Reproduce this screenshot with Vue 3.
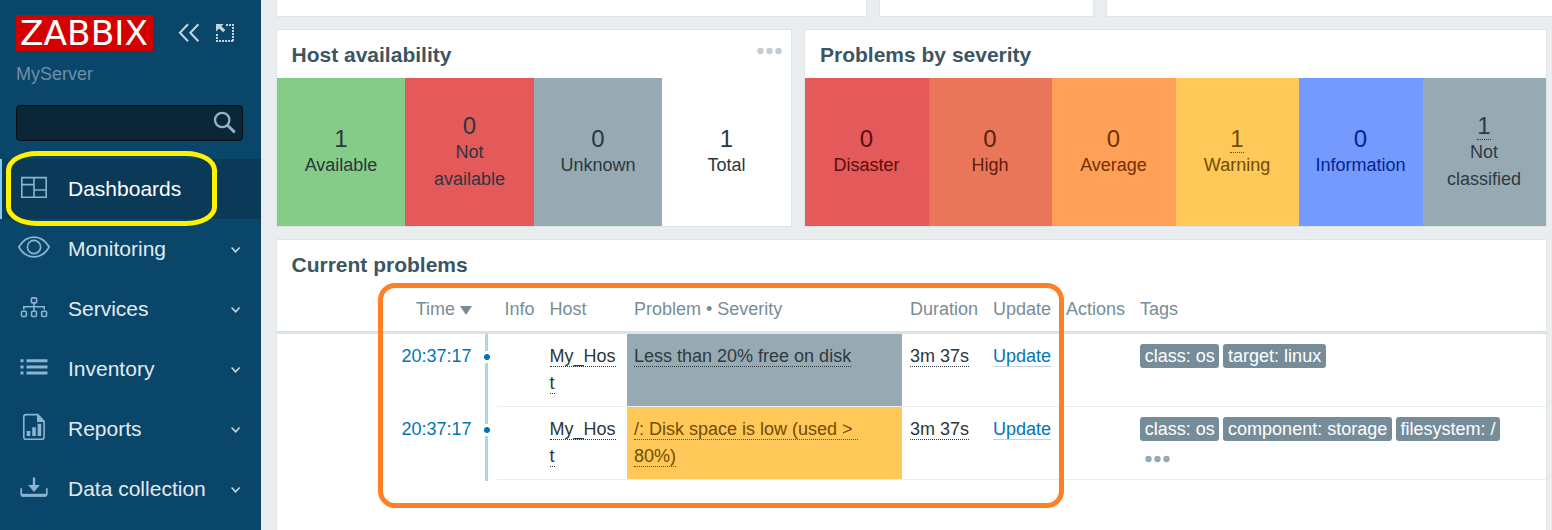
<script setup>
const menu = [
  { label: 'Dashboards', icon: 'dash', active: true },
  { label: 'Monitoring', icon: 'eye' },
  { label: 'Services', icon: 'tree' },
  { label: 'Inventory', icon: 'list' },
  { label: 'Reports', icon: 'report' },
  { label: 'Data collection', icon: 'download' },
]
const hosts = [
  { n: 1, label: 'Available', cls: 'ok' },
  { n: 0, label: 'Not available', cls: 'bad' },
  { n: 0, label: 'Unknown', cls: 'unknown' },
  { n: 1, label: 'Total', cls: 'total' },
]
const severities = [
  { n: 0, label: 'Disaster', cls: 'disaster' },
  { n: 0, label: 'High', cls: 'high' },
  { n: 0, label: 'Average', cls: 'average' },
  { n: 1, label: 'Warning', cls: 'warning', link: true },
  { n: 0, label: 'Information', cls: 'info' },
  { n: 1, label: 'Not classified', cls: 'na', link: true },
]
const problems = [
  { time: '20:37:17', name: 'Less than 20% free on disk', cls: 'na', tags: ['class: os', 'target: linux'] },
  { time: '20:37:17', name: '/: Disk space is low (used >\u00a0 80%)', cls: 'warning', tags: ['class: os', 'component: storage', 'filesystem: /'], more: true },
]
</script>

<template>
  <div class="page">
    <aside class="sidebar">
      <div class="brand">
        <div class="logo">
          <svg width="137" height="36" viewBox="0 0 137 36">
            <text x="4" y="30.3" font-size="34" textLength="128" lengthAdjust="spacingAndGlyphs" fill="#fff">ZABBIX</text>
          </svg>
        </div>
        <svg class="collapse" width="22" height="20" viewBox="0 0 22 20" fill="none" stroke="#c3d5e0" stroke-width="2">
          <path d="M10 1.3 1.9 9.8 10 18.3M20.4 1.3 12.3 9.8l8.1 8.5" />
        </svg>
        <svg class="kiosk" width="20" height="20" viewBox="0 0 20 20">
          <path d="M11 2H19" stroke="#c3d5e0" stroke-width="2" stroke-dasharray="2 1" />
          <path d="M18 4V18M2 11V18M1 18H19" fill="none" stroke="#c3d5e0" stroke-width="2" stroke-dasharray="2 1" />
          <path d="M1 1h7.600L6.400 3.200l3.900 3.900-2.200 2.200-3.900-3.900L1 8.600z" fill="#c3d5e0" />
        </svg>
      </div>
      <div class="server">MyServer</div>
      <div class="search">
        <svg width="24" height="24" viewBox="0 0 24 24" fill="none" stroke="#8fb3cb">
          <circle cx="9.200" cy="9" r="7.200" stroke-width="2.300" />
          <path d="M14.400 14.200 21.800 21.400" stroke-width="2.900" />
        </svg>
      </div>
      <nav>
        <div v-for="m in menu" :key="m.label" class="item" :class="{ active: m.active }">
          <svg class="icon" width="36" height="36" viewBox="0 0 36 36" fill="none" stroke="#8ab4d0" stroke-width="1.600">
            <path v-if="m.icon === 'dash'" d="M5.800 7.600h24.400v19.600H5.800zM18 7.600v19.600M5.800 14.600H18M18 20h12.200" />
            <g v-else-if="m.icon === 'eye'">
              <path d="M2.800 17C10.500 3.800 25.500 3.800 33.200 17 25.500 30.200 10.500 30.200 2.800 17z" />
              <circle cx="18" cy="17" r="6.600" />
            </g>
            <g v-else-if="m.icon === 'tree'">
              <rect x="15.400" y="7.900" width="5.200" height="5" rx="1" />
              <path d="M18 12.900v7.800M7.800 19.600v-2.900h20.400v2.900" />
              <rect x="5.500" y="21.300" width="4.800" height="5.200" rx="1" />
              <rect x="15.600" y="21.300" width="4.800" height="5.200" rx="1" />
              <rect x="25.700" y="21.300" width="4.800" height="5.200" rx="1" />
            </g>
            <g v-else-if="m.icon === 'list'" stroke-width="3">
              <path d="M4.500 10.800h3M10.500 10.800h21M4.500 17h3M10.500 17h21M4.500 23h3M10.500 23h21" />
            </g>
            <g v-else-if="m.icon === 'report'">
              <path d="M10.300 4.600h11.500l6.300 6.600v15.700q0 2.300-2.300 2.300H10.100q-2.300 0-2.300-2.300V6.900q0-2.300 2.500-2.300z" />
              <path d="M21 4.200v7.800h7.600z" fill="#8ab4d0" stroke="none" />
              <path d="M12.500 26v-5M18 26v-8.800M23.400 26V13.800" stroke-width="3.600" />
            </g>
            <g v-else>
              <path d="M18 7.500v8" stroke-width="2.400" />
              <path d="M12.200 15h11.600L18 22z" fill="#8ab4d0" stroke="none" />
              <path d="M5.200 18.300v5.400q0 2 2 2h21.600q2 0 2-2v-5.400" stroke-width="1.700" />
              <path d="M6 25.300h24" stroke-width="3" />
            </g>
          </svg>
          <span class="label">{{ m.label }}</span>
          <svg v-if="!m.active" class="chev" width="10" height="8" viewBox="0 0 10 8" fill="none" stroke="#c3d5e0" stroke-width="1.700">
            <path d="M.6 1.500 4.600 5.800 8.600 1.500" />
          </svg>
        </div>
      </nav>
      <div class="mark yellow"></div>
    </aside>

    <main class="main">
      <div class="row top">
        <div class="widget w1"></div>
        <div class="widget w2"></div>
        <div class="widget w3"></div>
      </div>
      <div class="row mid">
        <section class="widget hostw">
          <header>
            <h4>Host availability</h4>
            <svg width="25" height="8" viewBox="0 0 25 8" fill="#c3ced4"><circle cx="3.500" cy="4" r="3.200" /><circle cx="12.500" cy="4" r="3.200" /><circle cx="21.500" cy="4" r="3.200" /></svg>
          </header>
          <div class="tiles">
            <div v-for="t in hosts" :key="t.label" class="tile" :class="t.cls">
              <span class="num">{{ t.n }}</span>
              <span class="name">{{ t.label }}</span>
            </div>
          </div>
        </section>
        <section class="widget sevw">
          <header><h4>Problems by severity</h4></header>
          <div class="tiles">
            <div v-for="t in severities" :key="t.label" class="tile" :class="t.cls">
              <span class="num" :class="{ dotted: t.link }">{{ t.n }}</span>
              <span class="name">{{ t.label }}</span>
            </div>
          </div>
        </section>
      </div>
      <section class="widget problems">
        <header><h4>Current problems</h4></header>
        <div class="grid thead">
          <div class="time">Time <i class="sort"></i></div>
          <div></div>
          <div class="c info-c">Info</div>
          <div class="c host">Host</div>
          <div class="c prob">Problem • Severity</div>
          <div class="c">Duration</div>
          <div class="c">Update</div>
          <div class="c">Actions</div>
          <div class="c">Tags</div>
        </div>
        <div v-for="p in problems" :key="p.name" class="grid trow">
          <div class="time"><a>{{ p.time }}</a></div>
          <div class="line"><i></i></div>
          <div class="c"></div>
          <div class="c host"><span class="dotted">My_Host</span></div>
          <div class="c prob" :class="p.cls"><span class="dotted">{{ p.name }}</span></div>
          <div class="c"><span class="dotted">3m 37s</span></div>
          <div class="c"><a class="upd">Update</a></div>
          <div class="c"></div>
          <div class="c tagcell">
            <div class="tags"><span v-for="t in p.tags" :key="t" class="tag">{{ t }}</span></div>
            <svg v-if="p.more" width="25" height="8" viewBox="0 0 25 8" fill="#97aab3"><circle cx="3.500" cy="4" r="3.200" /><circle cx="12.500" cy="4" r="3.200" /><circle cx="21.500" cy="4" r="3.200" /></svg>
          </div>
        </div>
      </section>
      <div class="mark orange"></div>
    </main>
  </div>
</template>

<style>
html, body { overflow: hidden; }
</style>

<style scoped>
* { box-sizing: border-box; }
.page { position: relative; display: flex; width: 1552px; height: 530px; overflow: hidden; font: 18px/27px "Liberation Sans", Arial, sans-serif; color: #2a373e; background: #e9edf0; }
.sidebar { width: 261px; flex: none; background: #0a466a; }
.brand { display: flex; padding: 15px 0 0 16px; height: 61px; }
.logo { width: 137px; height: 36px; background: #d40000; font-family: "DejaVu Sans", sans-serif; }
.logo svg { display: block; overflow: visible; }
.collapse { margin: 8px 0 0 25px; }
.kiosk { margin: 8px 0 0 15px; }
.server { padding-left: 16px; color: #6d90a7; }
.search { display: flex; justify-content: flex-end; margin: 17px 18px 0 16px; height: 36px; padding: 5px 5px 0 0; border: 1px solid #020d14; border-radius: 4px; background: #092738; }
nav { margin-top: 18px; }
.item { display: flex; align-items: center; height: 60px; padding: 0 20px 2px 16px; font-size: 21px; color: #e3eaef; }
.item.active { padding-left: 14px; border-left: 2px solid #80ccf7; background: #0b3a58; color: #fff; }
.label { flex: 1; padding-left: 16px; }
.chev { margin-top: 3px; }
.main { flex: 1; min-width: 0; padding-left: 15px; }
.row { display: flex; gap: 12px; }
.widget { flex: none; background: #fff; border: 1px solid #dfe4e7; }
.top { height: 17px; }
.top .widget { border-top: 0; }
.w1 { width: 591px; }
.w2 { width: 215px; }
.w3 { width: 460px; }
.mid { margin-top: 12px; height: 198px; }
.hostw { width: 516px; }
.sevw { width: 743px; }
header { display: flex; justify-content: space-between; height: 48px; padding: 0 9px 0 14.500px; }
.sevw header { padding-left: 15px; }
header svg { margin-top: 17px; }
h4 { margin: 0; font-size: 21px; line-height: 50px; color: #3c5563; }
.tiles { display: grid; height: 148px; grid-template-columns: 128px 129px 128px 129px; }
.sevw .tiles { grid-template-columns: 124px 123px 124px 123px 124px 123px; }
.tile { display: flex; flex-direction: column; align-items: center; justify-content: center; padding: 0 15px; text-align: center; }
.sevw .tile { padding: 0 16px 0 15px; }
.tile .num { height: 28px; padding-top: 1px; font-size: 24px; line-height: 25px; }
.tile .name { margin-top: -1px; }
.ok { background: #86cc89; }
.bad { background: #e45959; }
.unknown { background: #97aab3; }
.disaster { background: #e45959; color: #5a0e0e; }
.high { background: #e97659; color: #5f1d0a; }
.average { background: #ffa059; color: #733100; }
.warning { background: #ffc859; color: #734d00; }
.info { background: #7499ff; color: #00268e; }
.na { background: #97aab3; color: #2d3a40; }
.dotted { border-bottom: 1px dotted currentColor; }
.problems { width: 1271px; height: 300px; margin-top: 12px; }
.grid { display: grid; grid-template-columns: 201px 19px 45px 85px 275px 83px 73px 74px 414px; }
.thead { height: 46px; padding-top: 8px; border-bottom: 3px solid #dce2e5; color: #768d99; }
.time { padding-right: 6.500px; text-align: right; }
.thead .time { padding-right: 6px; }
.sort { display: inline-block; border: 6px solid transparent; border-top: 9px solid #768d99; border-bottom: 0; }
.c { padding-left: 8px; white-space: nowrap; }
.c.prob { padding-left: 7px; }
.c.host, .info-c { padding-left: 7.500px; }
.trow { height: 73px; }
.trow .time, .trow .c { padding-top: 9px; }
.trow .c { border-bottom: 1px solid #ebeef0; }
.trow .host { padding-right: 10px; white-space: normal; word-break: break-all; }
.trow .prob { padding-right: 30px; white-space: normal; }
a { color: #0275b8; }
.upd { border-bottom: 1px solid #c3d3dc; }
.line { display: flex; justify-content: center; padding-right: 1px; background: linear-gradient(#a8d6ee, #a8d6ee) 7px 0 / 3px 100% no-repeat; }
.line i { width: 6px; height: 12px; margin-top: 17px; background: radial-gradient(circle at 50% 50%, #0275b8 2.600px, #fff 3.300px); }
.trow:last-child .line { margin-bottom: -1px; }
.tags { display: flex; gap: 4px; padding-top: 1px; height: 27px; }
.tag { height: 24px; padding: 0 4.700px; border-radius: 3px; line-height: 24px; background: #768d99; color: #fff; }
.tagcell svg { display: block; margin: 12px 0 0 5px; }
.mark { position: absolute; pointer-events: none; border: 5px solid; }
.yellow { left: 6px; top: 151px; width: 211px; height: 75px; border-color: #fff200; border-radius: 31px / 19px; }
.orange { left: 378px; top: 283px; width: 686px; height: 225px; border-color: #ff7f27; border-radius: 17px; }
</style>
